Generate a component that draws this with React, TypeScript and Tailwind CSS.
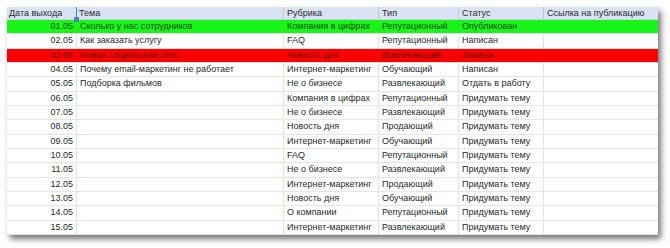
import React from "react";

type Row = { d: string; t: string; r: string; tp: string; s: string; c?: "g" | "r" };

const rows: Row[] = [
  { d: "01.05", t: "Сколько у нас сотрудников", r: "Компания в цифрах", tp: "Репутационный", s: "Опубликован", c: "g" },
  { d: "02.05", t: "Как заказать услугу", r: "FAQ", tp: "Репутационный", s: "Написан" },
  { d: "03.05", t: "Новая социальная сеть", r: "Новость дня", tp: "Вовлекающий", s: "Замена", c: "r" },
  { d: "04.05", t: "Почему email-маркетинг не работает", r: "Интернет-маркетинг", tp: "Обучающий", s: "Написан" },
  { d: "05.05", t: "Подборка фильмов", r: "Не о бизнесе", tp: "Развлекающий", s: "Отдать в работу" },
  { d: "06.05", t: "", r: "Компания в цифрах", tp: "Репутационный", s: "Придумать тему" },
  { d: "07.05", t: "", r: "Не о бизнесе", tp: "Развлекающий", s: "Придумать тему" },
  { d: "08.05", t: "", r: "Новость дня", tp: "Продающий", s: "Придумать тему" },
  { d: "09.05", t: "", r: "Интернет-маркетинг", tp: "Обучающий", s: "Придумать тему" },
  { d: "10.05", t: "", r: "FAQ", tp: "Репутационный", s: "Придумать тему" },
  { d: "11.05", t: "", r: "Не о бизнесе", tp: "Развлекающий", s: "Придумать тему" },
  { d: "12.05", t: "", r: "Интернет-маркетинг", tp: "Продающий", s: "Придумать тему" },
  { d: "13.05", t: "", r: "Новость дня", tp: "Обучающий", s: "Придумать тему" },
  { d: "14.05", t: "", r: "О компании", tp: "Репутационный", s: "Придумать тему" },
  { d: "15.05", t: "", r: "Интернет-маркетинг", tp: "Развлекающий", s: "Придумать тему" },
];

const grid = "grid grid-cols-[70px_207px_95px_80px_85px_114px]";

export default function App() {
  return (
    <div className="w-[670px] h-[248px] bg-white overflow-hidden pt-[7px] pl-[7px]" style={{ fontFamily: '"Liberation Sans", Arial, sans-serif' }}>
      <div className="w-[651px] bg-white shadow-[3px_4px_6px_rgba(0,0,0,0.55)] text-[9px] leading-none text-[#2a2a2a]">
        <div className={`${grid} h-[13px] bg-[#d9e3f4] border-b border-[#c9d3e3]`}>
          <div className="relative flex items-center pl-[2px] border-r border-[#4f81bd] whitespace-nowrap">
            Дата выхода
            <div className="absolute right-[-3px] bottom-[-3px] w-[5px] h-[5px] bg-[#4f81bd]" />
          </div>
          <div className="flex items-center pl-[2px] border-r border-[#c0c8d6] whitespace-nowrap">Тема</div>
          <div className="flex items-center pl-[3px] border-r border-[#c0c8d6] whitespace-nowrap">Рубрика</div>
          <div className="flex items-center pl-[3px] border-r border-[#c0c8d6] whitespace-nowrap">Тип</div>
          <div className="flex items-center pl-[3px] border-r border-[#c0c8d6] whitespace-nowrap">Статус</div>
          <div className="flex items-center pl-[3px] whitespace-nowrap">Ссылка на публикацию</div>
        </div>
        {rows.map((row) => {
          const bg = row.c === "g" ? "bg-[#19f519] text-[#124a12]" : row.c === "r" ? "bg-[#ff0000] text-[#6a0000]" : "bg-white";
          const bd = row.c ? "border-transparent" : "border-[#e3e3e3]";
          return (
            <div key={row.d} className={`${grid} h-[14.33px] border-b border-[#e6e6e6] ${bg}`}>
              <div className={`flex items-center justify-end pr-[3px] border-r ${bd}`}>{row.d}</div>
              <div className={`flex items-center pl-[3px] border-r ${bd} whitespace-nowrap`}>{row.t}</div>
              <div className={`flex items-center pl-[3px] border-r ${bd} whitespace-nowrap`}>{row.r}</div>
              <div className={`flex items-center pl-[3px] border-r ${bd} whitespace-nowrap`}>{row.tp}</div>
              <div className={`flex items-center pl-[3px] border-r ${bd} whitespace-nowrap`}>{row.s}</div>
              <div className="flex items-center pl-[3px]"></div>
            </div>
          );
        })}
      </div>
    </div>
  );
}
